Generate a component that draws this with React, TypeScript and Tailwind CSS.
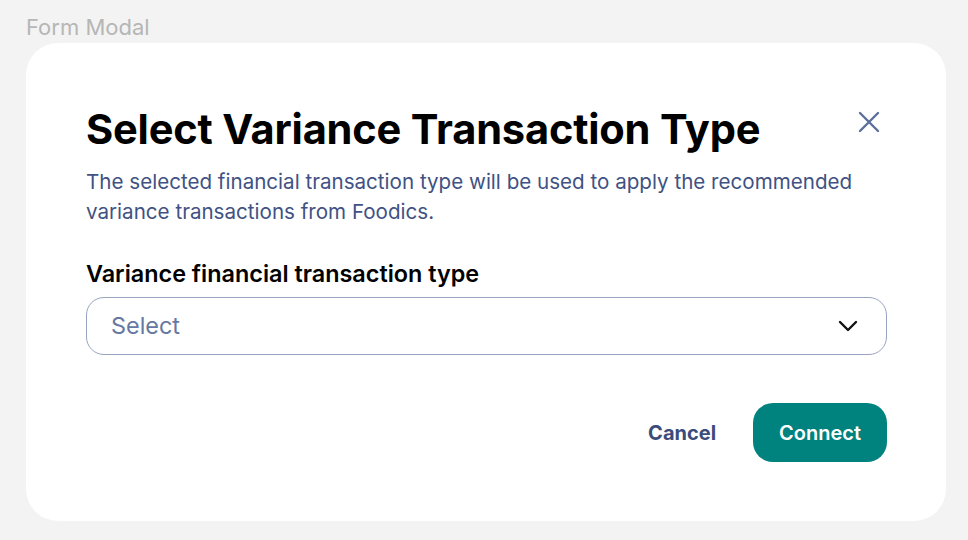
import React from 'react';

const CloseIcon = () => (
  <svg width="24" height="24" viewBox="0 0 24 24" fill="none" stroke="#5b6f9c" strokeWidth="2.4" strokeLinecap="round">
    <path d="M3 3L21 21M21 3L3 21" />
  </svg>
);

const ChevronDown = () => (
  <svg width="20" height="12" viewBox="0 0 20 12" fill="none" stroke="#111" strokeWidth="2.4" strokeLinecap="round" strokeLinejoin="round">
    <path d="M2 2L10 10L18 2" />
  </svg>
);

export default function App() {
  return (
    <div className="min-h-[540px] w-full bg-[#f3f3f3] pl-[26px] pr-[22px] pt-[12px] font-['Inter',sans-serif]">
      <div className="text-[22px] leading-[30px] text-[#b6b6b6]">Form Modal</div>

      <div className="mt-[1px] rounded-[32px] bg-white pl-[60px] pr-[59px] pt-[60px] pb-[59px]">
        <div className="flex items-start justify-between">
          <h1 className="text-[41.6px] font-bold leading-[52px] tracking-[-0.2px] text-black">
            Select Variance Transaction Type
          </h1>
          <button className="mr-[6px] mt-[7px]">
            <CloseIcon />
          </button>
        </div>

        <p className="mt-[12px] text-[20.6px] leading-[30px] text-[#3f5283]">
          The selected financial transaction type will be used to apply the recommended
          <br />
          variance transactions from Foodics.
        </p>

        <label className="mt-[32px] block text-[23.4px] font-semibold leading-[30px] text-black">
          Variance financial transaction type
        </label>

        <div className="mt-[8px] flex h-[58px] items-center justify-between rounded-[18px] border border-[#98a3c1] pl-[24px] pr-[28px]">
          <span className="text-[23.4px] text-[#6678a2]">Select</span>
          <ChevronDown />
        </div>

        <div className="mt-[48px] flex items-center justify-end gap-[37px]">
          <button className="text-[20px] font-bold text-[#3b4c7c]">Cancel</button>
          <button className="h-[59px] rounded-[20px] bg-[#00827f] px-[26px] text-[20px] font-semibold text-white">
            Connect
          </button>
        </div>
      </div>
    </div>
  );
}
